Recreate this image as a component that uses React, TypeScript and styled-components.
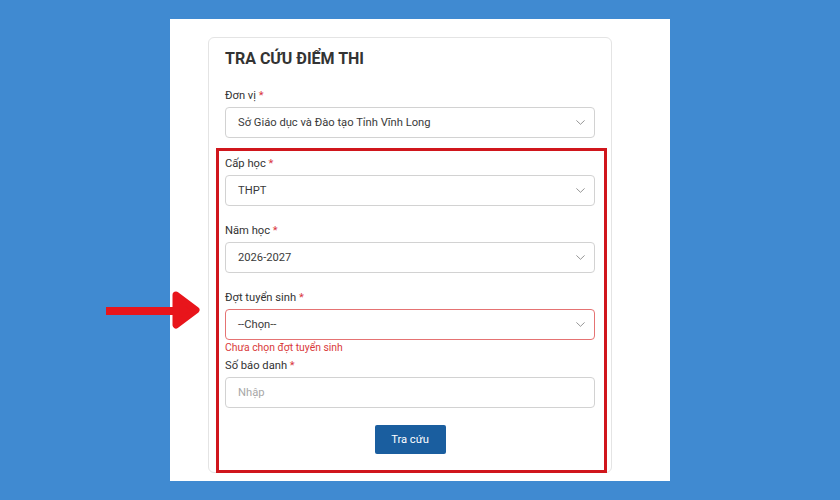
import React from "react";
import styled, { createGlobalStyle } from "styled-components";

const GlobalStyle = createGlobalStyle`
  html, body {
    margin: 0;
    padding: 0;
    background: #408ad1;
  }
  body {
    font-family: Roboto, "Noto Sans", "Liberation Sans", sans-serif;
    color: #333;
  }
`;

interface FieldProps {
  label: string;
  children: React.ReactNode;
  error?: string;
}

const Field: React.FC<FieldProps> = ({ label, children, error }) => (
  <FieldWrap hasError={Boolean(error)}>
    <Label>
      {label} <Star>*</Star>
    </Label>
    {children}
    {error && <ErrorText>{error}</ErrorText>}
  </FieldWrap>
);

const Chevron = () => (
  <svg width="9" height="5" viewBox="0 0 9 5" fill="none">
    <path d="M0.7 0.7l3.8 3.6 3.8-3.6" stroke="#8a8a8a" strokeWidth="0.9" strokeLinecap="round" strokeLinejoin="round" />
  </svg>
);

const Select: React.FC<{ value: string; invalid?: boolean }> = ({ value, invalid }) => (
  <SelectBox invalid={invalid}>
    <span>{value}</span>
    <Chevron />
  </SelectBox>
);

const Arrow = () => (
  <ArrowMark width="95" height="40" viewBox="0 0 95 40">
    <rect x="0" y="17" width="70" height="8" fill="#e8151b" />
    <polygon
      points="70,5 90,20 70,35"
      fill="#e8151b"
      stroke="#e8151b"
      strokeWidth="7"
      strokeLinejoin="round"
    />
  </ArrowMark>
);

export default function App() {
  return (
    <>
      <GlobalStyle />
      <Page>
        <Arrow />
        <Panel>
          <Card>
            <Title>TRA CỨU ĐIỂM THI</Title>
            <Field label="Đơn vị">
              <Select value="Sở Giáo dục và Đào tạo Tỉnh Vĩnh Long" />
            </Field>
            <Highlight>
              <Field label="Cấp học">
                <Select value="THPT" />
              </Field>
              <Field label="Năm học">
                <Select value="2026-2027" />
              </Field>
              <Field label="Đợt tuyển sinh" error="Chưa chọn đợt tuyển sinh">
                <Select value="--Chọn--" invalid />
              </Field>
              <Field label="Số báo danh">
                <TextInput placeholder="Nhập" />
              </Field>
              <Actions>
                <SubmitButton type="button">Tra cứu</SubmitButton>
              </Actions>
            </Highlight>
          </Card>
        </Panel>
      </Page>
    </>
  );
}

const Page = styled.div`
  position: relative;
  width: 840px;
  height: 500px;
  display: flex;
  justify-content: center;
  padding-top: 19px;
  box-sizing: border-box;
  overflow: hidden;
`;

const ArrowMark = styled.svg`
  position: absolute;
  left: 106px;
  top: 290px;
`;

const Panel = styled.div`
  width: 500px;
  height: 462px;
  background: #fff;
  padding: 18px 58px 0 38px;
  box-sizing: border-box;
`;

const Card = styled.div`
  border: 1px solid #e4e4e4;
  border-radius: 6px;
  padding: 10px 16px 0 16px;
  height: 436px;
  box-sizing: border-box;
`;

const Title = styled.h1`
  margin: 0 0 17px;
  font-size: 16px;
  line-height: 22px;
  font-weight: 700;
  color: #333;
`;

const FieldWrap = styled.div<{ hasError: boolean }>`
  margin-bottom: ${(p) => (p.hasError ? "2px" : "16px")};
`;

const Label = styled.div`
  font-size: 11.2px;
  line-height: 18px;
  margin-bottom: 2px;
  color: #333;
`;

const Star = styled.span`
  color: #d9363e;
`;

const SelectBox = styled.div<{ invalid?: boolean }>`
  height: 31px;
  box-sizing: border-box;
  border: 1px solid ${(p) => (p.invalid ? "#e57373" : "#d2d2d2")};
  border-radius: 4px;
  display: flex;
  align-items: center;
  justify-content: space-between;
  padding: 0 9px 0 12px;
  font-size: 11.2px;
  color: #3a3a3a;
`;

const TextInput = styled.input`
  display: block;
  width: 100%;
  height: 31px;
  box-sizing: border-box;
  border: 1px solid #d2d2d2;
  border-radius: 4px;
  padding: 0 12px;
  font-family: inherit;
  font-size: 11.2px;
  color: #333;
  outline: none;

  &::placeholder {
    color: #a8a8a8;
  }
`;

const ErrorText = styled.div`
  font-size: 10.4px;
  line-height: 15px;
  color: #d93a3a;
`;

const Highlight = styled.div`
  border: 3px solid #d0161c;
  margin: -6px -12px 0 -9px;
  padding: 4px 9px 16px 6px;
`;

const Actions = styled.div`
  display: flex;
  justify-content: center;
  padding-top: 1px;
`;

const SubmitButton = styled.button`
  width: 71px;
  height: 29px;
  border: none;
  border-radius: 2px;
  background: #1a5e9f;
  color: #fff;
  font-family: inherit;
  font-size: 11.2px;
  cursor: pointer;
`;
